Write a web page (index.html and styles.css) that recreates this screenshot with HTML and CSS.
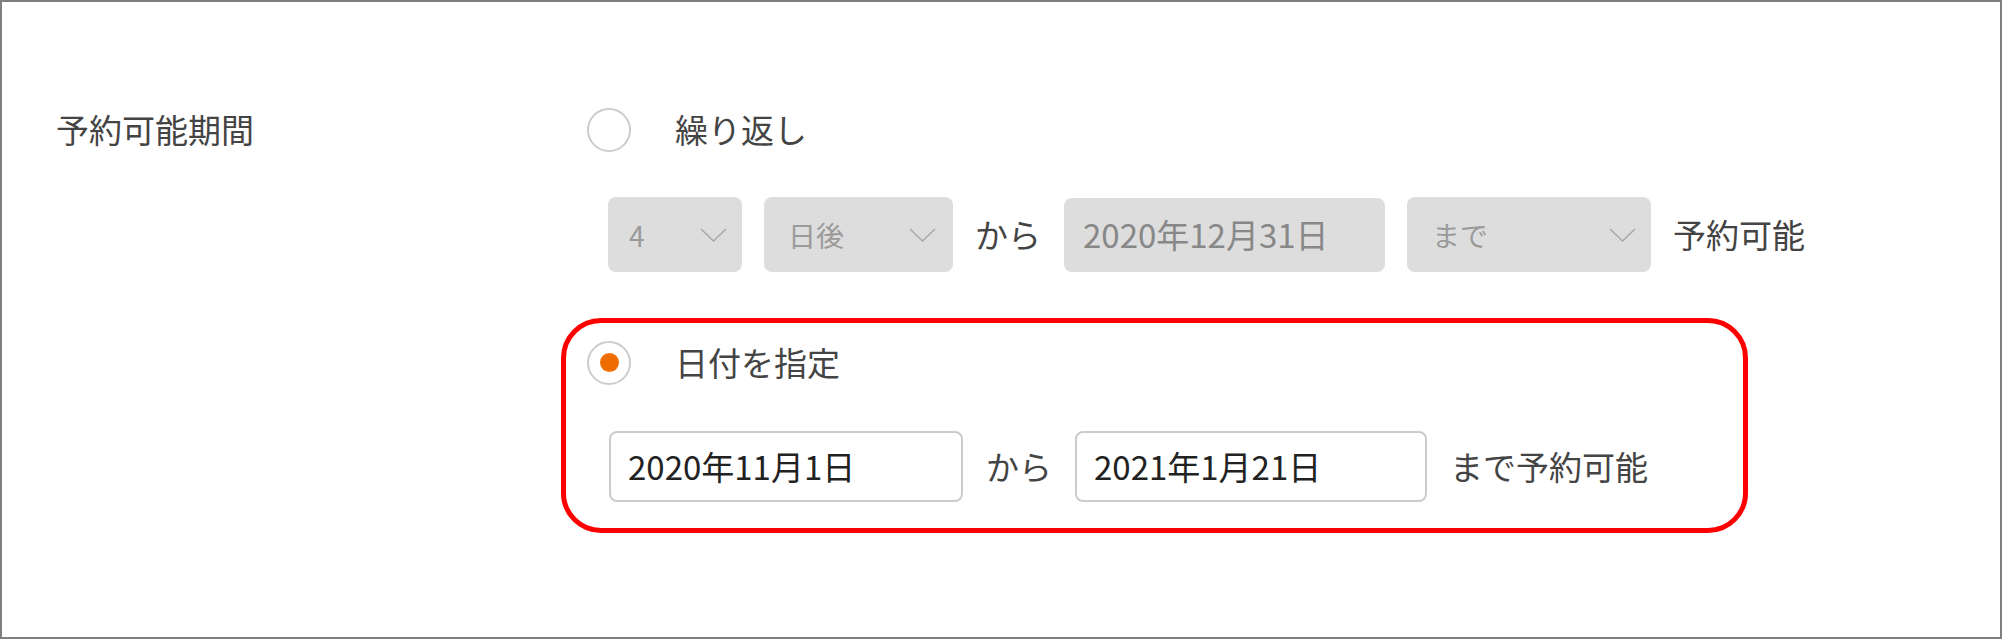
FILE: index.html
```html
<!DOCTYPE html>
<html lang="ja">
<head>
<meta charset="utf-8">
<title>予約可能期間</title>
<link rel="stylesheet" href="styles.css">
</head>
<body>
<div class="frame">
  <div class="field-label"><div class="label-row">予約可能期間</div></div>
  <div class="options">
    <div class="radio-row">
      <span class="radio"></span><span class="radio-text">繰り返し</span>
    </div>
    <div class="repeat-row">
      <div class="select s-num"><span>4</span><svg class="chev" width="27" height="14" viewBox="0 0 27 14"><polyline points="1,1 13.5,13 26,1"/></svg></div>
      <div class="select s-unit"><span>日後</span><svg class="chev" width="27" height="14" viewBox="0 0 27 14"><polyline points="1,1 13.5,13 26,1"/></svg></div>
      <span class="txt txt-from">から</span>
      <div class="datebox">2020年12月31日</div>
      <div class="select s-until"><span>まで</span><svg class="chev" width="27" height="14" viewBox="0 0 27 14"><polyline points="1,1 13.5,13 26,1"/></svg></div>
      <span class="txt">予約可能</span>
    </div>
    <div class="highlight">
      <div class="radio-row">
        <span class="radio checked"></span><span class="radio-text">日付を指定</span>
      </div>
      <div class="date-row">
        <div class="input in-start">2020年11月1日</div>
        <span class="txt">から</span>
        <div class="input in-end">2021年1月21日</div>
        <span class="txt">まで予約可能</span>
      </div>
    </div>
  </div>
</div>
</body>
</html>
```
FILE: styles.css
```css
html, body {
  margin: 0;
  padding: 0;
  background: #ffffff;
}

.frame {
  display: flex;
  width: 2002px;
  height: 639px;
  box-sizing: border-box;
  border: 2px solid #7f7f7f;
  background: #ffffff;
  font-family: "Noto Sans CJK JP", "Noto Sans", sans-serif;
  color: #444444;
}

.field-label {
  width: 531px;
  padding-left: 54px;
  padding-top: 105px;
  flex: none;
}

.label-row {
  height: 45px;
  display: flex;
  align-items: center;
  font-size: 33px;
  line-height: 1;
  color: #444444;
}

.options {
  padding-top: 105px;
  display: flex;
  flex-direction: column;
}

.radio-row {
  height: 45px;
  display: flex;
  align-items: center;
}

.radio {
  width: 44px;
  height: 44px;
  box-sizing: border-box;
  border: 2px solid #cccccc;
  border-radius: 50%;
  display: flex;
  align-items: center;
  justify-content: center;
  flex: none;
}

.radio.checked::after {
  content: "";
  width: 19px;
  height: 19px;
  border-radius: 50%;
  background: #ef6c00;
}

.radio-text {
  margin-left: 44px;
  font-size: 33px;
  line-height: 1;
  color: #444444;
}

.repeat-row {
  margin-top: 45px;
  margin-left: 21px;
  height: 75px;
  display: flex;
  align-items: center;
  gap: 22px;
}

.select {
  height: 75px;
  box-sizing: border-box;
  background: #dddddd;
  border-radius: 8px;
  display: flex;
  align-items: center;
  justify-content: space-between;
  padding-right: 15px;
  font-size: 28px;
  line-height: 1;
  color: #9a9a9a;
  flex: none;
}

.s-num {
  width: 134px;
  padding-left: 21px;
}

.s-unit {
  width: 189px;
  padding-left: 24px;
  padding-right: 17px;
}

.s-until {
  width: 244px;
  padding-left: 25px;
}

.chev polyline {
  fill: none;
  stroke: #aaaaaa;
  stroke-width: 1.6;
}

.txt {
  font-size: 33px;
  line-height: 1;
  color: #444444;
  white-space: nowrap;
}

.txt-from {
  margin-right: 1px;
}

.datebox {
  width: 321px;
  height: 74px;
  box-sizing: border-box;
  background: #dddddd;
  border-radius: 8px;
  display: flex;
  align-items: center;
  padding-left: 19px;
  font-size: 33px;
  line-height: 1;
  color: #888888;
  flex: none;
}

.highlight {
  margin-top: 46px;
  margin-left: -26px;
  width: 1187px;
  box-sizing: border-box;
  border: 5px solid #ff0000;
  border-radius: 40px;
  padding: 17px 0 26px 21px;
}

.date-row {
  margin-top: 46px;
  margin-left: 22px;
  height: 71px;
  display: flex;
  align-items: center;
  gap: 23px;
}

.input {
  height: 71px;
  box-sizing: border-box;
  border: 2px solid #cccccc;
  border-radius: 8px;
  background: #ffffff;
  display: flex;
  align-items: center;
  padding-left: 17px;
  font-size: 33px;
  line-height: 1;
  color: #222222;
  flex: none;
}

.in-start {
  width: 354px;
}

.in-end {
  width: 352px;
}
```
